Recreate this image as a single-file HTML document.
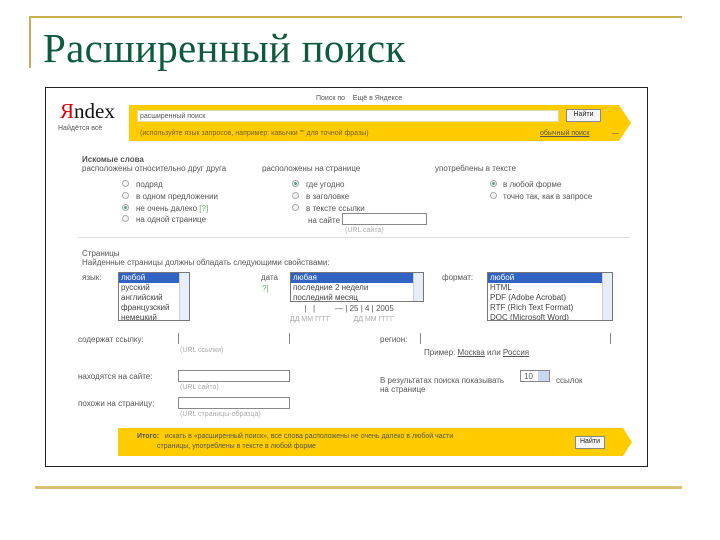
<!DOCTYPE html>
<html><head><meta charset="utf-8"><style>
*{margin:0;padding:0;box-sizing:border-box}
body{width:720px;height:540px;background:#fff;position:relative;overflow:hidden;font-family:"Liberation Sans",sans-serif}
.a{position:absolute;white-space:nowrap}
.t{font-size:8px;color:#555;line-height:9px}
.g{color:#aaa;font-size:7px}
.r{position:absolute;width:7px;height:7px;border:1px solid #aaa;border-radius:50%;background:#f4f4f4}
.r.on::after{content:"";position:absolute;left:1px;top:1px;width:3px;height:3px;border-radius:50%;background:#5a8}
.in{position:absolute;border:1px solid #888;background:#fff}
.lb{position:absolute;border:1px solid #777;background:#fff;font-size:8px;line-height:10px;color:#444;padding-left:2px;overflow:hidden}
.lb .s{background:#3163c5;color:#fff;margin-left:-2px;padding-left:2px}
.sb{position:absolute;right:0;top:0;bottom:0;width:10px;background:#e8eef8;border-left:1px solid #ccd}
.btn{position:absolute;background:#f6f6f6;border:1px solid #888;font-size:7px;color:#222;text-align:center;line-height:10px}
</style></head><body>
<div class="a" style="left:30px;top:16px;width:652px;height:2px;background:#c8b050"></div>
<div class="a" style="left:29px;top:16px;width:2px;height:52px;background:#c8b050"></div>
<div class="a" style="left:43px;top:25px;font-family:'Liberation Serif',serif;font-size:41px;color:#0e5a3c;line-height:46px;letter-spacing:0.3px">Расширенный поиск</div>

<div class="a" style="left:45px;top:87px;width:603px;height:380px;border:1px solid #222;background:#fff"></div>
<div class="a t" style="left:316px;top:94px;font-size:7px">Поиск по &nbsp;&nbsp; Ещё в Яндексе</div>
<div class="a" style="left:60px;top:100px;font-family:'Liberation Serif',serif;font-size:21px;line-height:22px;color:#111"><span style="color:#d00">Я</span>ndex</div>
<div class="a t" style="left:58px;top:124px;font-size:7px">Найдётся всё</div>
<svg class="a" style="left:129px;top:105px" width="503" height="36"><polygon points="0,0 490,0 502,18 490,36 0,36" fill="#fc0"/></svg>
<div class="in" style="left:137px;top:110px;width:422px;height:12px;border-color:#dda"></div>
<div class="a t" style="left:140px;top:112px;font-size:7px">расширенный поиск</div>
<div class="btn" style="left:566px;top:109px;width:35px;height:13px">Найти</div>
<div class="a t" style="left:140px;top:129px;font-size:7px;color:#7a6020">(используйте язык запросов, например: кавычки "" для точной фразы)</div>
<div class="a t" style="left:540px;top:129px;font-size:7px;text-decoration:underline">обычный поиск</div>
<div class="a t" style="left:612px;top:129px;font-size:7px">—</div>

<div class="a t" style="left:82px;top:155px;font-weight:bold">Искомые слова</div>
<div class="a t" style="left:82px;top:164px">расположены относительно друг друга</div>
<div class="a t" style="left:262px;top:164px">расположены на странице</div>
<div class="a t" style="left:435px;top:164px">употреблены в тексте</div>
<div class="r" style="left:122px;top:180px"></div><div class="a t" style="left:136px;top:180px">подряд</div>
<div class="r" style="left:122px;top:192px"></div><div class="a t" style="left:136px;top:192px">в одном предложении</div>
<div class="r on" style="left:122px;top:204px"></div><div class="a t" style="left:136px;top:204px">не очень далеко <span style="color:#6a6">[?]</span></div>
<div class="r" style="left:122px;top:215px"></div><div class="a t" style="left:136px;top:215px">на одной странице</div>
<div class="r on" style="left:292px;top:180px"></div><div class="a t" style="left:306px;top:180px">где угодно</div>
<div class="r" style="left:292px;top:192px"></div><div class="a t" style="left:306px;top:192px">в заголовке</div>
<div class="r" style="left:292px;top:204px"></div><div class="a t" style="left:306px;top:204px">в тексте ссылки</div>
<div class="a t" style="left:308px;top:216px">на сайте</div>
<div class="in" style="left:342px;top:213px;width:85px;height:12px"></div>
<div class="a g" style="left:345px;top:227px">(URL сайта)</div>
<div class="r on" style="left:490px;top:180px"></div><div class="a t" style="left:503px;top:180px">в любой форме</div>
<div class="r" style="left:490px;top:192px"></div><div class="a t" style="left:503px;top:192px">точно так, как в запросе</div>
<div class="a" style="left:78px;top:237px;width:552px;height:1px;background:#ddd"></div>

<div class="a t" style="left:82px;top:249px">Страницы</div>
<div class="a t" style="left:82px;top:258px">Найденные страницы должны обладать следующими свойствами:</div>
<div class="a t" style="left:82px;top:273px">язык:</div>
<div class="lb" style="left:118px;top:272px;width:72px;height:49px"><div class="s">любой</div>русский<br>английский<br>французский<br>немецкий<div class="sb"></div></div>
<div class="a t" style="left:261px;top:273px">дата</div>
<div class="a t" style="left:262px;top:284px;color:#6a6">?|</div>
<div class="lb" style="left:290px;top:272px;width:134px;height:30px"><div class="s">любая</div>последние 2 недели<br>последний месяц<div class="sb"></div></div>
<div class="a t" style="left:302px;top:304px">&nbsp;|&nbsp;&nbsp;&nbsp;|&nbsp;&nbsp;&nbsp;&nbsp;&nbsp;&nbsp;&nbsp;&nbsp;&nbsp;— | 25 | 4 | 2005</div>
<div class="a g" style="left:290px;top:316px">ДД ММ ГГГГ &nbsp;&nbsp;&nbsp;&nbsp;&nbsp;&nbsp;&nbsp;&nbsp;&nbsp;&nbsp; ДД ММ ГГГГ</div>
<div class="a t" style="left:442px;top:273px">формат:</div>
<div class="lb" style="left:487px;top:272px;width:126px;height:49px"><div class="s">любой</div>HTML<br>PDF (Adobe Acrobat)<br>RTF (Rich Text Format)<br>DOC (Microsoft Word)<div class="sb"></div></div>

<div class="a t" style="left:78px;top:335px">содержат ссылку:</div>
<div class="a" style="left:178px;top:333px;width:1px;height:11px;background:#888"></div>
<div class="a" style="left:289px;top:333px;width:1px;height:11px;background:#888"></div>
<div class="a g" style="left:180px;top:347px">(URL ссылки)</div>
<div class="a t" style="left:380px;top:335px">регион:</div>
<div class="a" style="left:420px;top:333px;width:1px;height:11px;background:#888"></div>
<div class="a" style="left:610px;top:333px;width:1px;height:11px;background:#888"></div>
<div class="a t" style="left:424px;top:348px">Пример: <u>Москва</u> или <u>Россия</u></div>
<div class="a t" style="left:78px;top:372px">находятся на сайте:</div>
<div class="in" style="left:178px;top:370px;width:112px;height:12px"></div>
<div class="a g" style="left:180px;top:384px">(URL сайта)</div>
<div class="a t" style="left:380px;top:376px">В результатах поиска показывать</div>
<div class="in" style="left:520px;top:370px;width:30px;height:12px"></div>
<div class="a t" style="left:524px;top:372px">10</div>
<div class="a" style="left:538px;top:371px;width:11px;height:10px;background:#c8d8f4"></div>
<div class="a t" style="left:556px;top:376px">ссылок</div>
<div class="a t" style="left:380px;top:385px">на странице</div>
<div class="a t" style="left:78px;top:399px">похожи на страницу:</div>
<div class="in" style="left:178px;top:397px;width:112px;height:12px"></div>
<div class="a g" style="left:180px;top:411px">(URL страницы-образца)</div>

<svg class="a" style="left:118px;top:428px" width="515" height="28"><polygon points="0,0 505,0 514,14 505,28 0,28" fill="#fc0"/></svg>
<div class="a t" style="left:137px;top:432px;font-size:7px"><b>Итого:</b> &nbsp; искать в «расширенный поиск», все слова расположены не очень далеко в любой части</div>
<div class="a t" style="left:157px;top:442px;font-size:7px">страницы, употреблены в тексте в любой форме</div>
<div class="btn" style="left:575px;top:436px;width:30px;height:13px">Найти</div>

<div class="a" style="left:35px;top:486px;width:647px;height:3px;background:#d9c070"></div>
</body></html>
